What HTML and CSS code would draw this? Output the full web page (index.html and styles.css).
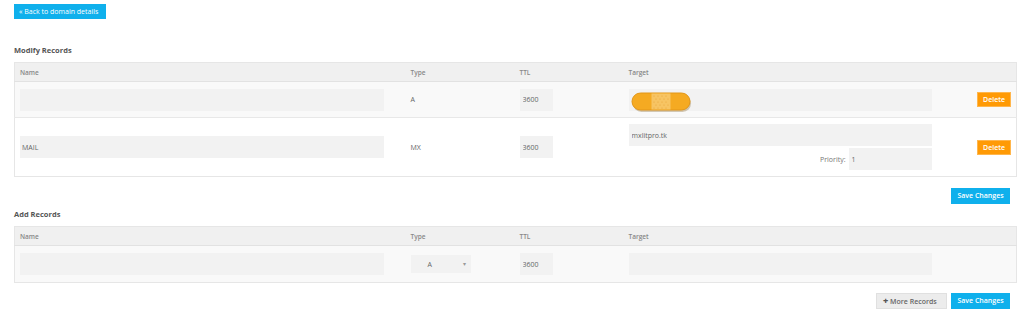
FILE: index.html
```html
<!DOCTYPE html>
<html>
<head>
    <meta charset="UTF-8">
    <title>Manage DNS Records</title>
    <meta name="viewport" content="width=device-width, initial-scale=1.0">
    <link rel="stylesheet" href="styles.css">
</head>
<body>
    <div class="page">
        <div class="top-bar">
            <a class="btn btn-blue back-btn" href="#">&laquo; Back to domain details</a>
        </div>

        <h2 class="section-title first">Modify Records</h2>
        <table class="records">
            <colgroup>
                <col class="col-name"><col class="col-type"><col class="col-ttl"><col class="col-target"><col class="col-action">
            </colgroup>
            <thead>
                <tr><th>Name</th><th>Type</th><th>TTL</th><th>Target</th><th></th></tr>
            </thead>
            <tbody>
                <tr class="row-short shaded">
                    <td><input class="field name-field" type="text" value=""></td>
                    <td class="type-cell">A</td>
                    <td><input class="field ttl-field" type="text" value="3600"></td>
                    <td>
                        <div class="target-wrap">
                            <input class="field target-field" type="text" value="">
                            <!-- sticker over the hidden ip -->
                            <svg class="bandage" width="62" height="22" viewBox="0 0 62 22">
                                <rect x="2" y="3" width="58" height="17" rx="8.5" fill="#8a6a30" opacity="0.35"/>
                                <rect x="1" y="1" width="58" height="17" rx="8.5" fill="#f5aa22" stroke="#e29618" stroke-width="1"/>
                                <rect x="20.5" y="1.5" width="19" height="16" fill="#f7c463"/>
                                <g fill="#e9a63a">
                                    <circle cx="23" cy="4" r="0.6"/><circle cx="27" cy="4" r="0.6"/><circle cx="31" cy="4" r="0.6"/><circle cx="35" cy="4" r="0.6"/>
                                    <circle cx="25" cy="7" r="0.6"/><circle cx="29" cy="7" r="0.6"/><circle cx="33" cy="7" r="0.6"/><circle cx="37" cy="7" r="0.6"/>
                                    <circle cx="23" cy="10" r="0.6"/><circle cx="27" cy="10" r="0.6"/><circle cx="31" cy="10" r="0.6"/><circle cx="35" cy="10" r="0.6"/>
                                    <circle cx="25" cy="13" r="0.6"/><circle cx="29" cy="13" r="0.6"/><circle cx="33" cy="13" r="0.6"/><circle cx="37" cy="13" r="0.6"/>
                                    <circle cx="23" cy="16" r="0.6"/><circle cx="27" cy="16" r="0.6"/><circle cx="31" cy="16" r="0.6"/><circle cx="35" cy="16" r="0.6"/>
                                </g>
                            </svg>
                        </div>
                    </td>
                    <td class="action-cell"><a class="btn btn-orange" href="#">Delete</a></td>
                </tr>
                <tr class="row-tall">
                    <td><input class="field name-field" type="text" value="MAIL"></td>
                    <td class="type-cell">MX</td>
                    <td><input class="field ttl-field" type="text" value="3600"></td>
                    <td class="target-cell">
                        <input class="field target-field" type="text" value="mxlitpro.tk">
                        <div class="priority">
                            <label>Priority:</label>
                            <input class="field priority-field" type="text" value="1">
                        </div>
                    </td>
                    <td class="action-cell"><a class="btn btn-orange" href="#">Delete</a></td>
                </tr>
            </tbody>
        </table>
        <div class="actions first-actions">
            <a class="btn btn-blue" href="#">Save Changes</a>
        </div>

        <h2 class="section-title">Add Records</h2>
        <table class="records">
            <colgroup>
                <col class="col-name"><col class="col-type"><col class="col-ttl"><col class="col-target"><col class="col-action">
            </colgroup>
            <thead>
                <tr><th>Name</th><th>Type</th><th>TTL</th><th>Target</th><th></th></tr>
            </thead>
            <tbody>
                <tr class="row-add shaded">
                    <td><input class="field name-field" type="text" value=""></td>
                    <td>
                        <span class="select-box"><span>A</span><span class="caret">&#9662;</span></span>
                    </td>
                    <td><input class="field ttl-field" type="text" value="3600"></td>
                    <td><input class="field target-field" type="text" value=""></td>
                    <td></td>
                </tr>
            </tbody>
        </table>
        <div class="actions">
            <a class="btn btn-grey" href="#"><span class="plus">+</span> More Records</a>
            <a class="btn btn-blue" href="#">Save Changes</a>
        </div>
    </div>
</body>
</html>
```

FILE: styles.css
```css
body {
    margin: 0;
    font-family: "Open Sans", Arial, sans-serif;
    background-color: #fff;
    color: #666;
}
.page {
    padding: 4px 8px 0 14px;
}
.top-bar {
    display: flex;
}
.btn {
    display: inline-block;
    height: 15px;
    line-height: 15px;
    padding: 0 6px;
    font-size: 7px;
    font-weight: 600;
    color: #fff;
    text-decoration: none;
    box-sizing: border-box;
}
.btn-blue {
    background-color: #0fb0ec;
}
.back-btn {
    width: 92px;
    font-weight: 400;
    padding: 0 5px;
}
.btn-orange {
    background-color: #ff9a05;
    border: 1px solid #ffb64d;
    line-height: 13px;
    padding: 0 5px;
}
.btn-grey {
    background-color: #ececec;
    border: 1px solid #e0e0e0;
    color: #666;
    line-height: 14px;
    height: 16px;
    width: 71px;
}
.plus {
    font-weight: 800;
    font-size: 9px;
    color: #555;
}
.section-title {
    margin: 5px 0 7px 0;
    font-size: 7.5px;
    line-height: 10px;
    font-weight: 700;
    color: #555;
}
.section-title.first {
    margin-top: 26px;
    margin-bottom: 7px;
}
table.records {
    width: 1002px;
    table-layout: fixed;
    border-collapse: collapse;
    border: 1px solid #e6e6e6;
}
.col-name { width: 391px; }
.col-type { width: 109px; }
.col-ttl { width: 109px; }
.col-target { width: 314px; }
.col-action { width: 79px; }
th {
    background-color: #f0f0f0;
    border-bottom: 1px solid #e2e2e2;
    height: 18px;
    padding: 0 5px;
    text-align: left;
    font-size: 6.5px;
    font-weight: 600;
    color: #888;
}
td {
    padding: 0 5px;
    vertical-align: middle;
    font-size: 7px;
}
tr.shaded td {
    background-color: #f9f9f9;
}
tr.row-short td {
    height: 35px;
}
tr.row-add td {
    height: 36px;
}
tr.row-tall td {
    height: 58px;
    border-top: 1px solid #e8e8e8;
}
.type-cell {
    color: #666;
}
.field {
    display: block;
    height: 22px;
    border: none;
    background-color: #f2f2f2;
    font-family: "Open Sans", Arial, sans-serif;
    font-size: 7px;
    color: #666;
    padding: 0 3px;
    box-sizing: border-box;
    outline: none;
}
.name-field { width: 364px; padding-left: 2px; }
.ttl-field { width: 33px; }
.target-field { width: 303px; }
.priority-field { width: 83px; }
.target-wrap {
    position: relative;
    width: 303px;
}
.bandage {
    position: absolute;
    left: 2px;
    top: 3px;
}
.priority {
    display: flex;
    justify-content: flex-end;
    align-items: center;
    gap: 3px;
    width: 303px;
    margin-top: 2px;
}
.priority label {
    font-size: 7px;
    color: #777;
}
.action-cell {
    text-align: right;
}
.select-box {
    display: flex;
    align-items: center;
    width: 60px;
    height: 18px;
    background-color: #f2f2f2;
    box-sizing: border-box;
    padding: 0 5px 0 17px;
    font-size: 7px;
    color: #666;
}
.select-box .caret {
    margin-left: auto;
    font-size: 6px;
    color: #999;
}
.actions {
    display: flex;
    justify-content: flex-end;
    gap: 4px;
    width: 996px;
    margin-top: 10px;
}
.actions .btn-blue {
    height: 16px;
    line-height: 16px;
    width: 59px;
    padding: 0;
    text-align: center;
}
.first-actions {
    margin-top: 11px;
}
```
